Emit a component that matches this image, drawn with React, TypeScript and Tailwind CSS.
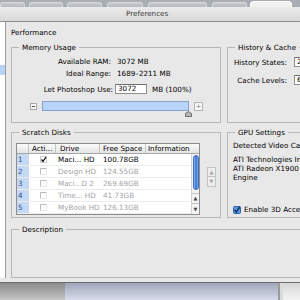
import React from "react";

type Disk = {n: number; on: boolean; drive: string; free: string};

const disks: Disk[] = [
  {n: 1, on: true, drive: "Maci... HD", free: "100.78GB"},
  {n: 2, on: false, drive: "Design HD", free: "124.55GB"},
  {n: 3, on: false, drive: "Maci...D 2", free: "269.69GB"},
  {n: 4, on: false, drive: "Time... HD", free: "41.73GB"},
  {n: 5, on: false, drive: "MyBook HD", free: "126.13GB"},
];

const tabClasses = [
  "w-[25px]",
  "w-[34px] ml-[4px]",
  "w-[35px] ml-[4px]",
  "w-[36px] ml-[5px]",
  "w-[59px] ml-[5px]",
  "w-[35px] ml-[5px]",
];

const Group = ({
  title,
  className = "",
  children,
}: {
  title: string;
  className?: string;
  children: React.ReactNode;
}) => (
  <fieldset className={`border border-[#b7b7b7] ${className}`}>
    <legend className="ml-[7px] px-[3px] leading-[9px]">{title}</legend>
    {children}
  </fieldset>
);

const Field = ({value, className = ""}: {value: string; className?: string}) => (
  <div
    className={`h-[10px] border border-[#8f8f8f] border-t-[#6f6f6f] bg-white pl-[2px] leading-[8px] ${className}`}>
    {value}
  </div>
);

const Check = ({on}: {on: boolean}) =>
  on ? (
    <svg width="7" height="7" viewBox="0 0 7 7">
      <rect x="0.5" y="0.5" width="6" height="6" fill="#fff" stroke="#c9c9c9" />
      <path d="M1.5 3.5 L3 5.5 L6 1" fill="none" stroke="#111" strokeWidth="1.3" />
    </svg>
  ) : (
    <svg width="7" height="7" viewBox="0 0 7 7">
      <path d="M0.5 6.5 V0.5 H6.5" fill="none" stroke="#b9b9b9" />
      <path d="M6.5 0.5 V6.5 H0.5" fill="none" stroke="#e6e6e6" />
    </svg>
  );

export default function App() {
  return (
    <div className="w-[300px] h-[300px] overflow-hidden flex flex-col bg-[#e8e8e8] font-['DejaVu_Sans',sans-serif] text-[7.2px] text-black">
      {/* window tabs behind */}
      <div className="h-[7px] shrink-0 flex items-end bg-[#a9aeb5]">
        {tabClasses.map((c, i) => (
          <div
            key={i}
            className={`${c} h-[5px] rounded-t-[3px] border-t border-x border-[#d6d9dd] bg-gradient-to-b from-[#c8ccd1] to-[#b6bbc1]`}
          />
        ))}
        <div className="w-[42px] ml-[3px] h-[6px] rounded-t-[4px] border-t border-x border-white bg-[#f1f1f1]" />
      </div>

      {/* title bar */}
      <div className="h-[15px] shrink-0 border-b border-[#8e8e8e] bg-gradient-to-b from-[#ebebeb] to-[#d8d8d8] pl-[126px] leading-[14px] text-[#3a3a3a]">
        Preferences
      </div>

      {/* body */}
      <div className="h-[260px] shrink-0 flex pb-[4px]">
        <div className="w-[6px] shrink-0 bg-white border-r border-[#9d9d9d] pt-[43px]">
          <div className="h-[10px] bg-[#b7d3f5]" />
        </div>

        <div className="w-[420px] shrink-0 pl-[5px] pt-[6px]">
          <div className="leading-[10px]">Performance</div>

          <div className="flex mt-[5px]">
            <Group title="Memory Usage" className="w-[210px] shrink-0">
              <div className="pt-[5px] pb-[11px] leading-[9px]">
                <div className="flex">
                  <span className="w-[99px] text-right">Available RAM:</span>
                  <span className="ml-[6px]">3072 MB</span>
                </div>
                <div className="flex mt-[3px]">
                  <span className="w-[99px] text-right">Ideal Range:</span>
                  <span className="ml-[6px]">1689–2211 MB</span>
                </div>
                <div className="flex items-center h-[10px] mt-[6px]">
                  <span className="w-[101px] text-right">Let Photoshop Use:</span>
                  <Field value="3072" className="ml-[2px] w-[32px]" />
                  <span className="ml-[5px]">MB (100%)</span>
                </div>
                <div className="flex items-center h-[10px] mt-[7px] pl-[18px]">
                  <div className="w-[7px] h-[7px] border border-[#a9a9a9] bg-[#f6f6f6] flex items-center justify-center">
                    <div className="w-[3px] h-px bg-[#555]" />
                  </div>
                  <div className="relative ml-[5px] w-[147px] h-[10px] border border-[#86a3cc] bg-[#b8d4fa]">
                    <svg
                      width="7"
                      height="6"
                      viewBox="0 0 7 6"
                      className="absolute right-[-4px] top-[9px]">
                      <path d="M0.5 5.5 V2.5 L3.5 0.5 L6.5 2.5 V5.5 Z" fill="#b5b5b5" stroke="#6e6e6e" />
                    </svg>
                  </div>
                  <div className="ml-[5px] w-[9px] h-[9px] border border-[#b3b3b3] bg-[#f6f6f6] flex items-center justify-center text-[6px] leading-none text-[#777]">
                    +
                  </div>
                </div>
              </div>
            </Group>

            <Group title="History & Cache" className="ml-[6px] flex-1">
              <div className="pt-[5px] leading-[9px]">
                <div className="flex items-center h-[10px]">
                  <span className="w-[59px] text-right">History States:</span>
                  <Field value="20" className="ml-[7px] w-[30px]" />
                </div>
                <div className="flex items-center h-[10px] mt-[8px]">
                  <span className="w-[59px] text-right">Cache Levels:</span>
                  <Field value="6" className="ml-[7px] w-[30px]" />
                </div>
              </div>
            </Group>
          </div>

          <div className="flex mt-[5px]">
            <Group title="Scratch Disks" className="w-[210px] shrink-0">
              <div className="flex pt-[6px] pb-[2px] pl-[4px]">
                <div className="w-[184px] border border-[#8e8e8e] bg-white leading-[9px]">
                  <div className="flex h-[10px] border-b border-[#a7a7a7] bg-gradient-to-b from-[#fbfbfb] to-[#e4e4e4]">
                    <div className="w-[12px] border-r border-[#c6c6c6]" />
                    <div className="w-[27px] border-r border-[#c6c6c6] pl-[3px]">Acti...</div>
                    <div className="w-[44px] border-r border-[#c6c6c6] pl-[4px]">Drive</div>
                    <div className="w-[46px] border-r border-[#c6c6c6] pl-[3px]">Free Space</div>
                    <div className="flex-1 pl-[2px] overflow-hidden whitespace-nowrap">Information</div>
                  </div>
                  <div className="flex">
                    <div className="w-[174px]">
                      {disks.map((d) => (
                        <div
                          key={d.n}
                          className={`flex h-[12px] items-center border-b border-[#ececec] ${
                            d.on ? "text-black" : "text-[#a3a3a3]"
                          }`}>
                          <div className="w-[12px] h-full bg-[#c6d9f3] text-[#1f4f9e] pl-[1px] leading-[12px]">
                            {d.n}
                          </div>
                          <div className="w-[27px] h-full flex items-center pl-[11px]">
                            <Check on={d.on} />
                          </div>
                          <div className="w-[44px] pl-[2px] whitespace-nowrap">{d.drive}</div>
                          <div className="w-[46px] pl-[3px]">{d.free}</div>
                          <div className="flex-1" />
                        </div>
                      ))}
                    </div>
                    <div className="w-[8px] flex flex-col border-l border-[#d2d2d2] bg-[#f3f3f3]">
                      <div className="mt-[1px] mx-auto w-[6px] h-[35px] rounded-full border border-[#3b6cc0] bg-gradient-to-r from-[#9cc1f2] via-[#2e6ad2] to-[#86b1ee]" />
                      <div className="flex-1" />
                      <div className="h-[10px] border-t border-[#c4c4c4] flex items-center justify-center text-[5px] leading-none text-[#444]">
                        ▲
                      </div>
                      <div className="h-[11px] border-t border-[#c4c4c4] flex items-center justify-center text-[5px] leading-none text-[#444]">
                        ▼
                      </div>
                    </div>
                  </div>
                </div>
                <div className="ml-[7px] mt-[24px] w-[9px]">
                  <div className="h-[10px] border border-[#c4c4c4] bg-[#ededed] flex items-center justify-center text-[5px] leading-none text-[#a5a5a5]">
                    ▲
                  </div>
                  <div className="h-[10px] border border-t-0 border-[#c4c4c4] bg-[#ededed] flex items-center justify-center text-[5px] leading-none text-[#a5a5a5]">
                    ▼
                  </div>
                </div>
              </div>
            </Group>

            <Group title="GPU Settings" className="ml-[6px] flex-1">
              <div className="pt-[4px] pl-[5px] leading-[9px] whitespace-nowrap">
                <div>Detected Video Card:</div>
                <div className="mt-[5px]">ATI Technologies Inc.</div>
                <div>ATI Radeon X1900 OpenGL</div>
                <div>Engine</div>
                <div className="flex items-center mt-[23px]">
                  <svg width="8" height="8" viewBox="0 0 8 8">
                    <rect x="0.5" y="0.5" width="7" height="7" rx="1" fill="#5b97e8" stroke="#2f5fa8" />
                    <path d="M1.8 4 L3.3 6 L6.6 1.2" fill="none" stroke="#0c1f40" strokeWidth="1.3" />
                  </svg>
                  <span className="ml-[3px]">Enable 3D Acceleration</span>
                </div>
              </div>
            </Group>
          </div>

          <Group title="Description" className="mt-[7px]">
            <div className="h-[43px]" />
          </Group>
        </div>
      </div>

      {/* desktop below the window */}
      <div className="h-[18px] shrink-0 flex border-t border-[#6c6c6c]">
        <div className="w-[65px] bg-gradient-to-b from-[#8a8a8a] to-[#c6c6c6]" />
        <div className="w-[213px] bg-gradient-to-b from-[#a0a6ba] to-[#d8dcec]" />
        <div className="w-[2px] bg-[#9a9a9a]" />
        <div className="w-[3px] bg-[#dadada]" />
        <div className="flex-1 bg-gradient-to-b from-[#d6d6d6] to-[#f3f3f3]" />
      </div>
    </div>
  );
}
